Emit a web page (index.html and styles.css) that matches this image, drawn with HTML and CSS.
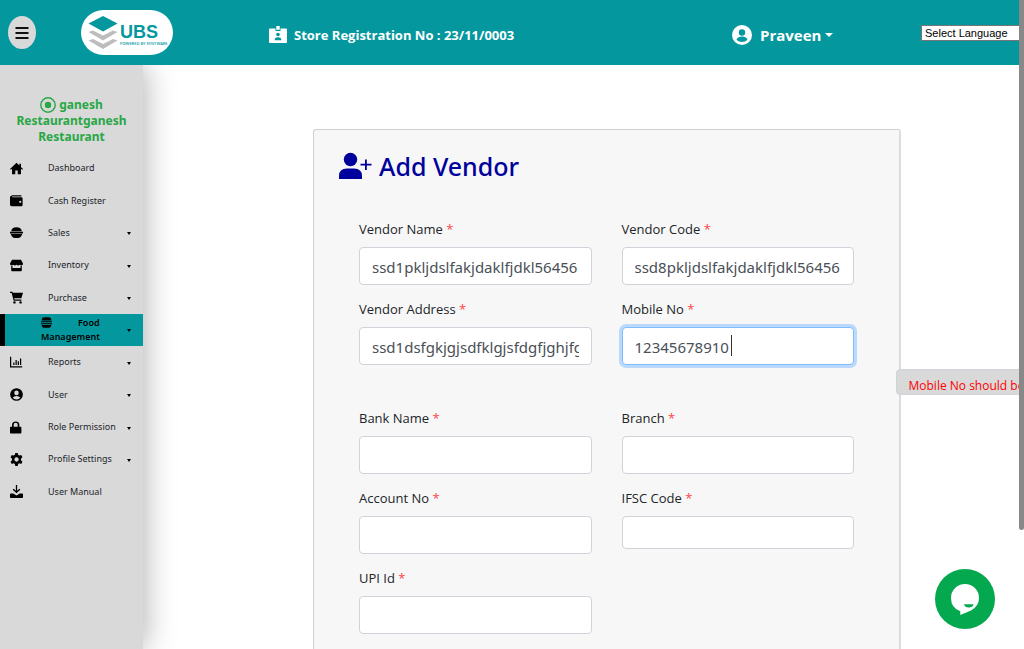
FILE: index.html
```html
<!DOCTYPE html>
<html lang="en">
<head>
<meta charset="utf-8">
<title>Add Vendor</title>
<link rel="stylesheet" href="styles.css">
</head>
<body>
<header class="topbar">
  <div class="topbar-menu">
    <button class="menu-btn" type="button" aria-label="Toggle menu">
      <svg width="14" height="14" viewBox="0 0 14 14"><path d="M0.500 2h13M0.500 7h13M0.500 12h13" stroke="#111" stroke-width="2.200"/></svg>
    </button>
  </div>
  <div>
    <a class="logo" href="#" aria-label="UBS home">
      <svg class="logo-mark" width="30" height="36" viewBox="0 0 30 36">
        <path d="M15 1 29.500 8.500 15 16.500.5 8.500z" fill="#04989e"/>
        <path d="M.5 17 5 15.500 15 20.500 25 15.500 29.500 17 15 25.500z" fill="#bdbdbd"/>
        <path d="M.5 25.500 5 24 15 29 25 24 29.500 25.500 15 34z" fill="#bdbdbd"/>
      </svg>
      <span class="logo-text"><b class="logo-name">UBS</b><small class="logo-tag">POWERED BY SYNTWARE</small></span>
    </a>
  </div>
  <div class="store">
    <svg width="18" height="17" viewBox="0 0 18 17"><path d="M1 2.500h5.500v2.500h5V2.500H17q1 0 1 1V16q0 1-1 1H1q-1 0-1-1V3.500q0-1 1-1z" fill="#fff"/><path d="M7.300 0h3.400v3.800H7.300z" fill="#fff"/><circle cx="9" cy="8.500" r="1.800" fill="#04989e"/><path d="M5.800 14.300v-1q0-2 3.200-2t3.200 2v1z" fill="#04989e"/></svg>
    <span>Store Registration No : 23/11/0003</span>
  </div>
  <button class="user-btn" type="button">
    <svg width="20" height="20" viewBox="0 0 20 20"><circle cx="10" cy="10" r="10" fill="#fff"/><circle cx="10" cy="7.500" r="3.200" fill="#04989e"/><path d="M4.500 14.800q1.500-3.300 5.500-3.300t5.500 3.300Q13.300 17 10 17t-5.500-2.200z" fill="#04989e"/></svg>
    <span>Praveen</span><i class="caret"></i>
  </button>
  <div class="lang"><select class="lang-select" aria-label="Select Language"><option>Select Language</option></select></div>
</header>

<div class="body">
  <nav class="sidebar">
    <h2 class="brand"><svg class="brand-icon" width="16" height="16" viewBox="0 0 16 16"><circle cx="8" cy="8" r="7.200" fill="none" stroke="#28a745" stroke-width="1.400"/><circle cx="8" cy="8" r="3.200" fill="#28a745"/></svg> ganesh Restaurantganesh Restaurant</h2>
    <ul class="nav">
      <li><a class="nav-link" href="#"><svg class="nav-icon" viewBox="0 0 16 16"><path d="M8 1 0 8.500l1 1L2.500 8.300V15h4v-4.500h3V15h4V8.300L15 9.500l1-1-2.500-2.400V2h-2v2.200z"/></svg><span>Dashboard</span></a></li>
      <li><a class="nav-link" href="#"><svg class="nav-icon" viewBox="0 0 16 16"><path d="M2 1.500h12v1.500H2.500v1H14q1.500 0 1.500 1.500v8q0 1.500-1.500 1.500H2q-2 0-2-2v-9q0-2 2-2zM12.500 8.200a1.300 1.300 0 1 0 .1 0z" fill-rule="evenodd"/></svg><span>Cash Register</span></a></li>
      <li><a class="nav-link" href="#"><svg class="nav-icon" viewBox="0 0 16 16"><path d="M1.500 6.500Q2 1.500 8 1.500t6.500 5zM0 7h16v2.200H0zM1 9.800h14q-1.500 5-5 5H6q-3.500 0-5-5z"/></svg><span>Sales</span><i class="caret"></i></a></li>
      <li><a class="nav-link" href="#"><svg class="nav-icon" viewBox="0 0 16 16"><path d="M2.500 1h11L16 5.500Q16 8 14 8q-1.500 0-2-1-1 1-2 1T8 7Q7 8 6 8T4 7Q3.500 8 2 8 0 8 0 5.500zM1.500 8.500H3V11h10V8.500h1.500V14q0 1-1 1h-11q-1 0-1-1z"/></svg><span>Inventory</span><i class="caret"></i></a></li>
      <li><a class="nav-link" href="#"><svg class="nav-icon" viewBox="0 0 16 16"><path d="M0 1h3l.5 1.300H16L14 9H5.200l.4 1.500H14V12H4.500L2 2.500H0z"/><circle cx="5.500" cy="14" r="1.500"/><circle cx="13" cy="14" r="1.500"/></svg><span>Purchase</span><i class="caret"></i></a></li>
      <li><a class="nav-link active" href="#"><span class="active-label"><svg class="active-icon" viewBox="0 0 16 16"><path d="M1 5Q1 .5 5 .5h6q4 0 4 4.500zM0 6.300h16v1.500H0zM0 9h16v1.500H0zM1 11.800h14q0 3.700-3 3.700H4q-3 0-3-3.700z"/></svg>Food<br>Management</span><i class="caret"></i></a></li>
      <li><a class="nav-link" href="#"><svg class="nav-icon" viewBox="0 0 16 16"><path d="M0 1h1.500v11.500H15V14H0zM4 8h1.500v3H4zM6.800 5h1.500v6H6.800zM9.500 6.500H11V11H9.500zM12.300 3h1.500v8h-1.500z"/></svg><span>Reports</span><i class="caret"></i></a></li>
      <li><a class="nav-link" href="#"><svg class="nav-icon" viewBox="0 0 16 16"><circle cx="8" cy="8" r="7.800"/><circle cx="8" cy="6" r="2.800" fill="#d9d9d9"/><path d="M3.300 12q1.200-2.300 4.700-2.300t4.700 2.300Q11 14 8 14t-4.700-2z" fill="#d9d9d9"/></svg><span>User</span><i class="caret"></i></a></li>
      <li><a class="nav-link" href="#"><svg class="nav-icon" viewBox="0 0 16 16"><path d="M1 7h1.500V5Q2.500.5 7 .5T11.500 5v2H13q1 0 1 1v6.500q0 1-1 1H1q-1 0-1-1V8q0-1 1-1zM4.500 7h5V5Q9.500 2.300 7 2.300T4.500 5z" fill-rule="evenodd"/></svg><span>Role Permission</span><i class="caret"></i></a></li>
      <li><a class="nav-link" href="#"><svg class="nav-icon" viewBox="0 0 16 16"><path d="M6.500 0h3l.5 2.300 1.500.9 2.300-.8 1.500 2.700L13.500 7v2l1.800 1.700-1.500 2.700-2.300-.7-1.500.9L9.500 16h-3L6 13.600l-1.500-.9-2.300.7-1.500-2.700L2.500 9V7L.7 5.100l1.500-2.700 2.300.8L6 2.300zM8 5.300a2.700 2.700 0 1 0 .1 0z" fill-rule="evenodd"/></svg><span>Profile Settings</span><i class="caret"></i></a></li>
      <li><a class="nav-link" href="#"><svg class="nav-icon" viewBox="0 0 16 16"><path d="M7.200 0h1.600v7l2.700-2.500 1.200 1.200L8 10.300 3.300 5.700l1.200-1.200L7.200 7zM1 10.500h3l4 2.500 4-2.500h3q1 0 1 1V15q0 1-1 1H1q-1 0-1-1v-3.500q0-1 1-1z"/></svg><span>User Manual</span></a></li>
    </ul>
  </nav>

  <main class="main">
    <form class="card">
      <h1 class="title"><svg width="33" height="28" viewBox="0 0 33 28" fill="#00009c"><circle cx="11.500" cy="7.500" r="6.700"/><path d="M0 27v-3q0-7.500 8-7.500h7q8 0 8 7.500v3zM26 7.500h1.800v4.300H32.500v1.800h-4.700v4.400H26v-4.400h-4.500v-1.800H26z"/></svg>Add Vendor</h1>
      <div class="fields">
        <div class="field"><label for="name">Vendor Name <em>*</em></label><input id="name" type="text" value="ssd1pkljdslfakjdaklfjdkl56456"></div>
        <div class="field"><label for="code">Vendor Code <em>*</em></label><input id="code" type="text" value="ssd8pkljdslfakjdaklfjdkl56456"></div>
        <div class="field"><label for="address">Vendor Address <em>*</em></label><input id="address" type="text" value="ssd1dsfgkjgjsdfklgjsfdgfjghjfghj"></div>
        <div class="field"><label for="mobile">Mobile No <em>*</em></label><input id="mobile" class="focused" type="text" value="12345678910"><span class="text-caret"></span><span class="error" role="alert">Mobile No should be</span></div>
        <div class="field spaced"><label for="bank">Bank Name <em>*</em></label><input id="bank" type="text"></div>
        <div class="field spaced"><label for="branch">Branch <em>*</em></label><input id="branch" type="text"></div>
        <div class="field"><label for="account">Account No <em>*</em></label><input id="account" type="text"></div>
        <div class="field"><label for="ifsc">IFSC Code <em>*</em></label><input id="ifsc" class="short" type="text"></div>
        <div class="field"><label for="upi">UPI Id <em>*</em></label><input id="upi" type="text"></div>
      </div>
    </form>
  </main>
</div>

<button class="chat" type="button" aria-label="Open chat">
  <svg width="60" height="60" viewBox="0 0 60 60"><path d="M30 15a14 14 0 0 1 14 14q0 8-8 12.500L25.300 46v-3.800Q16 39 16 29a14 14 0 0 1 14-14z" fill="#fff"/><path d="M29 35.200h9.500q-.7 3.300-4.700 3.300T29 35.200z" fill="#04a84f"/></svg>
</button>
<div class="scroll-thumb"></div>
</body>
</html>
```
FILE: styles.css
```css
* { box-sizing: border-box; }

body {
  margin: 0;
  height: 100vh;
  overflow: hidden;
  display: flex;
  flex-direction: column;
  position: relative;
  background: #fff;
  color: #212529;
  font-family: "Noto Sans", "Open Sans", sans-serif;
}

button { border: 0; padding: 0; background: none; font: inherit; color: inherit; cursor: pointer; }
a { color: inherit; text-decoration: none; }

.topbar {
  position: relative;
  z-index: 2;
  flex: none;
  height: 65px;
  padding-right: 5px;
  display: grid;
  grid-template-columns: 81px 188px 1fr 189px 98px;
  align-items: center;
  background: #04989e;
  color: #fff;
}
.topbar-menu { padding-left: 8px; }
.menu-btn {
  width: 28px;
  height: 33px;
  border-radius: 50%;
  background: #d9d9d9;
  display: flex;
  align-items: center;
  justify-content: center;
}
.logo {
  width: 92px;
  height: 45px;
  padding-left: 7px;
  border-radius: 23px;
  background: #fff;
  color: #04989e;
  display: flex;
  align-items: center;
  gap: 2px;
}
.logo-mark { flex: none; }
.logo-text { display: flex; flex-direction: column; padding-top: 4px; font-family: "Liberation Sans", Arial, sans-serif; }
.logo-name { font-size: 18px; line-height: 18px; }
.logo-tag { font-size: 4px; line-height: 5px; font-family: "Open Sans", sans-serif; font-weight: 600; white-space: nowrap; }
.store { display: flex; align-items: center; gap: 7px; padding-top: 4px; font-family: "Open Sans", sans-serif; font-size: 13px; font-weight: 700; white-space: nowrap; }
.user-btn { display: flex; align-items: center; gap: 8px; padding-top: 4px; font-family: "Open Sans", sans-serif; font-size: 15px; font-weight: 700; }
.caret { width: 0; height: 0; border: 4px solid transparent; border-top-color: currentColor; border-bottom: 0; }
.user-btn .caret { margin-left: -4px; }
.lang { overflow: hidden; display: flex; }
.lang-select {
  flex: none;
  width: 120px;
  height: 16px;
  padding: 0 3px;
  border: 1px solid #767676;
  border-radius: 0;
  background: #fff;
  color: #000;
  font: 11px "Liberation Sans", Arial, sans-serif;
  line-height: 12px;
  appearance: none;
}

.body { flex: 1; min-height: 0; display: flex; }

.sidebar {
  flex: none;
  width: 143px;
  padding-top: 32px;
  background: #d9d9d9;
  box-shadow: 0 0 30px rgba(0, 0, 0, .35);
}
.brand { margin: 0 0 7px; padding: 0 12px; color: #28a745; font-size: 12px; font-weight: 700; line-height: 16px; text-align: center; }
.brand-icon { vertical-align: -4px; }
.nav {
  list-style: none;
  margin: 0;
  padding: 0;
  height: 356px;
  display: grid;
  grid-auto-rows: 1fr;
  font-size: 9px;
  line-height: 14px;
}
.nav li { display: grid; }
.nav-link { display: flex; align-items: center; padding: 0 12px 0 10px; }
.nav-link .caret { margin: 2px 0 0 auto; border-width: 3px 2px 0; border-top-color: #000; }
.nav-icon { flex: none; width: 13px; height: 13px; margin-right: 25px; fill: #000; }
.active { padding-left: 36px; border-left: 5px solid #000; background: #04989e; color: #000; font-weight: 600; }
.active-icon { width: 11px; height: 11px; margin-right: 26px; vertical-align: -2px; }

.main { flex: 1; min-width: 0; padding: 64px 123px 0 170px; }
.card {
  min-height: 600px;
  padding: 16px 45px;
  border: 1px solid #d0d0d0;
  border-right: 2px solid #dcdcdc;
  border-radius: 3px;
  background: #f7f7f7;
}
.title {
  display: flex;
  align-items: center;
  gap: 7px;
  margin: 0 0 31px -20px;
  color: #00009c;
  font-size: 25px;
  line-height: 40px;
  font-weight: 500;
}
.fields { display: grid; grid-template-columns: 1fr 1fr; gap: 12px 30px; align-items: start; }
.field { position: relative; display: flex; flex-direction: column; }
.spaced { margin-top: 29px; }
.field label { margin-bottom: 6px; font-family: "Open Sans", sans-serif; font-size: 13px; line-height: 24px; }
.field em { color: #f44; font-style: normal; }
.field input {
  width: 100%;
  height: 38px;
  padding: 4px 12px 2px;
  border: 1px solid #ced4da;
  border-radius: 4px;
  background: #fff;
  color: #495057;
  font: inherit;
  font-size: 15px;
  outline: 0;
}
.field .focused { border-color: #80bdff; box-shadow: 0 0 0 3px #bbdafb; }
.field .short { height: 33px; }
.text-caret { position: absolute; left: 109px; bottom: 9px; width: 1px; height: 21px; background: #333; }
.error {
  position: absolute;
  left: 274px;
  top: 72px;
  height: 26px;
  padding: 5px 12px 0;
  border: 1px solid #ced4da;
  border-radius: 4px;
  background: #d9d9d9;
  color: #f00;
  font-family: "Open Sans", sans-serif;
  font-size: 12px;
  line-height: 22px;
  white-space: nowrap;
}

.chat { position: absolute; right: 29px; bottom: 20px; width: 60px; height: 60px; border-radius: 50%; background: #04a84f; }
.chat svg { display: block; }
.scroll-thumb { position: absolute; z-index: 3; top: 0; right: 0; width: 5px; height: 530px; border-radius: 0 0 3px 3px; background: #888; }
```
